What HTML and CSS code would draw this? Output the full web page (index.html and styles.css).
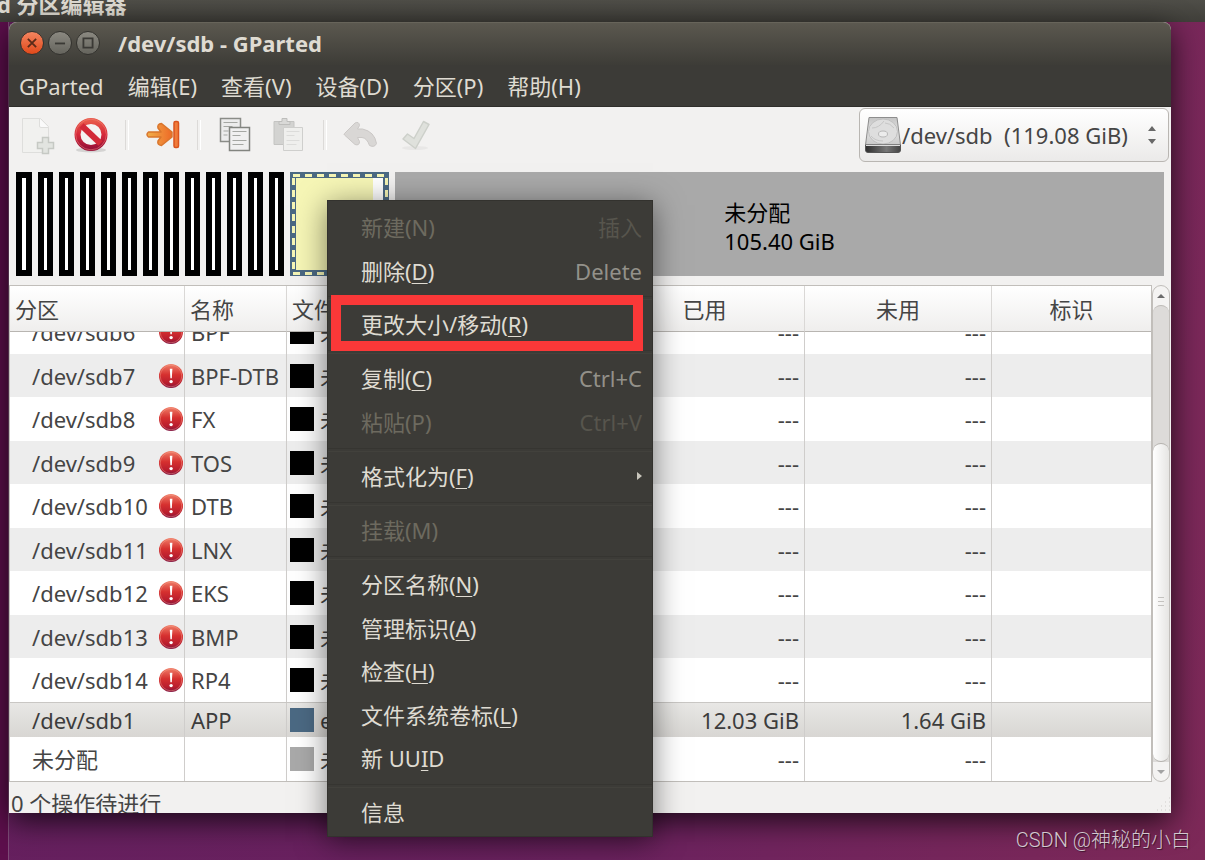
FILE: index.html
```html
<!DOCTYPE html>
<html lang="zh-CN">
<head>
<meta charset="utf-8">
<meta name="viewport" content="width=device-width, initial-scale=1">
<title>/dev/sdb - GParted</title>
<link rel="stylesheet" href="styles.css">
</head>
<body>
<svg class="defs" width="0" height="0" aria-hidden="true">
  <defs>
    <linearGradient id="red" x1="0" y1="0" x2="0" y2="1"><stop offset="0" stop-color="#f0806a"/><stop offset=".45" stop-color="#d6302f"/><stop offset=".8" stop-color="#b81d2e"/><stop offset="1" stop-color="#7d1340"/></linearGradient>
    <linearGradient id="stop" x1="0" y1="0" x2="0" y2="1"><stop offset="0" stop-color="#e8594a"/><stop offset=".5" stop-color="#d6293a"/><stop offset="1" stop-color="#9a1238"/></linearGradient>
    <linearGradient id="orange" x1="0" y1="0" x2="1" y2="0"><stop offset="0" stop-color="#f0b04c"/><stop offset="1" stop-color="#ee6a26"/></linearGradient>
    <linearGradient id="metal" x1="0" y1="0" x2="0" y2="1"><stop offset="0" stop-color="#c4c4c4"/><stop offset=".5" stop-color="#e2e2e2"/><stop offset="1" stop-color="#c9c9c9"/></linearGradient>
    <linearGradient id="base" x1="0" y1="0" x2="1" y2="0"><stop offset="0" stop-color="#2e2e2e"/><stop offset=".6" stop-color="#777"/><stop offset="1" stop-color="#444"/></linearGradient>
    <symbol id="error" viewBox="0 0 24 24">
      <circle cx="12" cy="12" r="12" fill="url(#red)"/>
      <circle cx="12" cy="12" r="10.8" fill="none" stroke="#f4a08c" stroke-opacity=".45"/>
      <path d="M10.8 4.8h2.6l-.6 9.4h-1.4z" fill="#fff"/><circle cx="12.1" cy="17.6" r="1.7" fill="#fff"/>
    </symbol>
  </defs>
</svg>

<header class="panel">d 分区编辑器</header>

<div class="desktop">
  <div class="launcher"></div>
  <main class="window">
    <div class="titlebar">
      <div class="controls">
        <button class="control close" aria-label="关闭"><svg viewBox="0 0 24 24"><path d="M7.500 7.500l9 9M16.500 7.500l-9 9"/></svg></button>
        <button class="control" aria-label="最小化"><svg viewBox="0 0 24 24"><path d="M6.500 12.500h11"/></svg></button>
        <button class="control" aria-label="最大化"><svg viewBox="0 0 24 24"><path d="M7 7h10v10h-10z"/></svg></button>
      </div>
      <h1 class="title">/dev/sdb - GParted</h1>
    </div>

    <nav class="menubar">
      <button>GParted</button><button>编辑(E)</button><button>查看(V)</button><button>设备(D)</button><button>分区(P)</button><button>帮助(H)</button>
    </nav>

    <div class="toolbar">
      <button class="tool" disabled aria-label="新建">
        <svg viewBox="0 0 36 36"><path d="M3.500 1.500h18l8 8v26h-26z" fill="#f1f1ef" stroke="#dededc"/><path d="M20.500 1.500v7.500q0 1.500 1.500 1.500h7.500" fill="#fafafa" stroke="#dededc"/><path d="M23.500 21.500h6v5h5v6h-5v5h-6v-5h-5v-6h5z" fill="#e2e4e0" stroke="#c6c9c4" stroke-width="1.500" transform="translate(0 -1)"/></svg>
      </button>
      <button class="tool" aria-label="删除">
        <svg viewBox="0 0 36 36"><ellipse cx="18" cy="33" rx="15" ry="2.500" fill="#000" opacity=".12"/><circle cx="18" cy="17.500" r="13.500" fill="#f4f3f2" stroke="url(#stop)" stroke-width="6"/><path d="M8.500 8.500l19 18" stroke="#d22a38" stroke-width="6"/><circle cx="18" cy="17.500" r="15.300" fill="none" stroke="#f08a80" stroke-opacity=".5"/></svg>
      </button>
      <span class="divider"></span>
      <button class="tool" aria-label="更改大小/移动">
        <svg viewBox="0 0 36 36"><path d="M3.500 15h12.500l-3-4q-1-4 3.500-4.500l10.500 8.500v5l-10.500 8.500q-4.500-.5-3.500-4.500l3-4h-12.500q-3-2.500 0-5z" fill="url(#orange)" stroke="#d9752c" stroke-width="1.500" stroke-linejoin="round"/><rect x="29" y="4.500" width="4.500" height="26" rx="1.500" fill="#f07b3a" stroke="#d9531e" stroke-width="1.500"/></svg>
      </button>
      <span class="divider"></span>
      <button class="tool" aria-label="复制">
        <svg viewBox="0 0 36 36"><path d="M3.500 1.500h20v23h-20z" fill="#ececec" stroke="#8a8c87" stroke-width="1.500"/><path d="M6.500 5.500h14M6.500 9.500h9M6.500 14h5M6.500 18h4" stroke="#a5a7a3"/><path d="M12.500 10.500h20v23h-20z" fill="#f0f0f0" stroke="#82847f" stroke-width="1.500"/><path d="M15.500 14.500h14M15.500 18.500h8M15.500 23.500h14M15.500 27.500h11" stroke="#a5a7a3"/></svg>
      </button>
      <button class="tool" disabled aria-label="粘贴">
        <svg viewBox="0 0 36 36"><path d="M3 4.500h20v23h-20z" fill="#d3d3d1" stroke="#c4c4c2"/><path d="M8 7.500v-3h3v-3h5v3h3v3z" fill="#d9d9d7" stroke="#bdbdbb"/><path d="M12.500 10.500h19v23h-19z" fill="#efefed" stroke="#cfcfcd"/><path d="M15.500 14.500h13M15.500 18.500h8M15.500 23.500h13M15.500 27.500h10" stroke="#dcdcda"/></svg>
      </button>
      <span class="divider"></span>
      <button class="tool" disabled aria-label="撤消">
        <svg viewBox="0 0 36 36"><path d="M1.500 16.500l10.500-10.500q4-2 4.500 2.500l-2 3.500h5q12 2.500 14 14.500q-2 4.500-7 2q-2.500-7.500-7.500-8h-4.500l2 4q0 4.500-4.500 3l-10.500-9.500q-1-1 0-1.500z" fill="#d9d7d5" stroke="#cbc8c6" stroke-linejoin="round"/></svg>
      </button>
      <button class="tool" disabled aria-label="应用">
        <svg viewBox="0 0 36 36"><ellipse cx="18" cy="31" rx="13" ry="2" fill="#000" opacity=".04"/><path d="M6 22l4.500-5 6.500 4.500 9.500-17 5.500 3-13.500 24z" fill="#dfe1dc" stroke="#cdd0ca" stroke-width="1.500" stroke-linejoin="round"/></svg>
      </button>

      <label class="device">
        <svg class="drive" viewBox="0 0 38 38"><path d="M5 1.500h28l3.500 27.500h-35z" fill="url(#metal)" stroke="#8d8d8d"/><ellipse cx="19" cy="15.500" rx="14.500" ry="12.500" fill="#dedede" stroke="#c0c0c0"/><ellipse cx="19" cy="18" rx="4.500" ry="3" fill="#ececec" stroke="#b8b8b8"/><path d="M8 12q7 0 12-7M30 12q-4-5-9-5M7 20q4 5 12 5" fill="none" stroke="#c6c6c6"/><path d="M1.500 29h35v5q0 2.500-2.500 2.500h-30q-2.500 0-2.500-2.500z" fill="url(#base)" stroke="#555"/><path d="M2 29.500h34" stroke="#ddd"/></svg>
        <select aria-label="设备"><option>/dev/sdb&nbsp;&nbsp;(119.08 GiB)</option></select>
        <svg class="spin" viewBox="0 0 10 20"><path d="M1 6l4-5 4 5zM1 14l4 5 4-5z" fill="#686868"/></svg>
      </label>
    </div>

    <div class="disk">
      <div class="slice first"></div><div class="slice"></div><div class="slice"></div><div class="slice"></div><div class="slice"></div><div class="slice"></div><div class="slice"></div><div class="slice"></div><div class="slice"></div><div class="slice"></div><div class="slice"></div><div class="slice"></div><div class="slice"></div>
      <div class="selected-part"><div class="usage"></div></div>
      <div class="free"><div>未分配<br>105.40 GiB</div></div>
    </div>

    <div class="list">
      <table class="parts">
        <thead>
          <tr><th>分区</th><th>名称</th><th>文件系统</th><th class="mid">已用</th><th class="mid">未用</th><th class="mid">标识</th></tr>
        </thead>
        <tbody>
          <tr><td><span>/dev/sdb6</span><svg class="err"><use href="#error"/></svg></td><td>BPF</td><td><i class="chip"></i>未知</td><td>---</td><td>---</td><td></td></tr>
          <tr><td><span>/dev/sdb7</span><svg class="err"><use href="#error"/></svg></td><td>BPF-DTB</td><td><i class="chip"></i>未知</td><td>---</td><td>---</td><td></td></tr>
          <tr><td><span>/dev/sdb8</span><svg class="err"><use href="#error"/></svg></td><td>FX</td><td><i class="chip"></i>未知</td><td>---</td><td>---</td><td></td></tr>
          <tr><td><span>/dev/sdb9</span><svg class="err"><use href="#error"/></svg></td><td>TOS</td><td><i class="chip"></i>未知</td><td>---</td><td>---</td><td></td></tr>
          <tr><td><span>/dev/sdb10</span><svg class="err"><use href="#error"/></svg></td><td>DTB</td><td><i class="chip"></i>未知</td><td>---</td><td>---</td><td></td></tr>
          <tr><td><span>/dev/sdb11</span><svg class="err"><use href="#error"/></svg></td><td>LNX</td><td><i class="chip"></i>未知</td><td>---</td><td>---</td><td></td></tr>
          <tr><td><span>/dev/sdb12</span><svg class="err"><use href="#error"/></svg></td><td>EKS</td><td><i class="chip"></i>未知</td><td>---</td><td>---</td><td></td></tr>
          <tr><td><span>/dev/sdb13</span><svg class="err"><use href="#error"/></svg></td><td>BMP</td><td><i class="chip"></i>未知</td><td>---</td><td>---</td><td></td></tr>
          <tr><td><span>/dev/sdb14</span><svg class="err"><use href="#error"/></svg></td><td>RP4</td><td><i class="chip"></i>未知</td><td>---</td><td>---</td><td></td></tr>
          <tr class="current"><td>/dev/sdb1</td><td>APP</td><td><i class="chip ext4"></i>ext4</td><td>12.03 GiB</td><td>1.64 GiB</td><td></td></tr>
          <tr><td>未分配</td><td></td><td><i class="chip none"></i>未分配</td><td>---</td><td>---</td><td></td></tr>
        </tbody>
      </table>
      <div class="scrollbar">
        <button class="step" aria-label="向上滚动"><svg viewBox="0 0 10 6"><path d="M1 5l4-4 4 4z" fill="#6b6b6b"/></svg></button>
        <div class="trough"><div class="thumb"><svg viewBox="0 0 6 10"><path d="M0 .5h6M0 4.500h6M0 8.500h6" stroke="#c4c2bf"/></svg></div></div>
        <button class="step" aria-label="向下滚动"><svg viewBox="0 0 10 6"><path d="M1 1l4 4 4-4z" fill="#a3a3a3"/></svg></button>
      </div>
    </div>

    <footer class="status"><span>0 个操作待进行</span>
      <svg class="grip" viewBox="0 0 16 16"><path d="M14 1h1M10 5h1M14 5h1M6 9h1M10 9h1M14 9h1M2 13h1M6 13h1M10 13h1M14 13h1" stroke="#cfcdca" stroke-width="1"/></svg>
    </footer>

    <ul class="menu" role="menu">
      <li><button role="menuitem" disabled>新建(N)<kbd>插入</kbd></button></li>
      <li><button role="menuitem"><span>删除(<u>D</u>)</span><kbd>Delete</kbd></button></li>
      <li class="rule" role="separator"></li>
      <li class="marked"><button role="menuitem"><span>更改大小/移动(<u>R</u>)</span></button></li>
      <li class="rule" role="separator"></li>
      <li><button role="menuitem"><span>复制(<u>C</u>)</span><kbd>Ctrl+C</kbd></button></li>
      <li><button role="menuitem" disabled>粘贴(P)<kbd>Ctrl+V</kbd></button></li>
      <li class="rule" role="separator"></li>
      <li><button role="menuitem"><span>格式化为(<u>F</u>)</span><svg class="sub" viewBox="0 0 6 10"><path d="M1 1l5 4-5 4z" fill="#c9c6bc"/></svg></button></li>
      <li class="rule" role="separator"></li>
      <li><button role="menuitem" disabled>挂载(M)</button></li>
      <li class="rule" role="separator"></li>
      <li><button role="menuitem"><span>分区名称(<u>N</u>)</span></button></li>
      <li><button role="menuitem"><span>管理标识(<u>A</u>)</span></button></li>
      <li><button role="menuitem"><span>检查(<u>H</u>)</span></button></li>
      <li><button role="menuitem"><span>文件系统卷标(<u>L</u>)</span></button></li>
      <li><button role="menuitem"><span>新 UU<u>I</u>D</span></button></li>
      <li class="rule" role="separator"></li>
      <li><button role="menuitem">信息</button></li>
    </ul>
  </main>
</div>
<div class="watermark">CSDN @神秘的小白</div>
</body>
</html>
```

FILE: styles.css
```css
* { box-sizing: border-box; }

body {
  margin: 0;
  min-height: 100vh;
  display: flex;
  flex-direction: column;
  overflow: hidden;
  position: relative;
  font: 22px/28px "Noto Sans", "Noto Sans CJK SC", sans-serif;
  color: #454545;
  background: #6b225e;
}

button, select {
  font: inherit;
  color: inherit;
  background: none;
  border: 0;
  padding: 0;
  margin: 0;
}

svg { display: block; flex: none; }
.defs { position: absolute; }

.panel {
  height: 22px;
  line-height: 8px;
  text-indent: -3px;
  font-weight: 700;
  white-space: nowrap;
  overflow: hidden;
  color: #dfdbd2;
  background: linear-gradient(#4f4e48, #403f3a);
}

.desktop {
  flex: 1;
  display: flex;
  padding: 0 34px 0 0;
  background: linear-gradient(100deg, #641f5e, #6b225f 55%, #7d2958);
}

.launcher {
  width: 9px;
  flex: none;
  background: #5d0f4c;
  border-right: 1px solid #7d4a76;
}

.window {
  flex: 1;
  min-width: 0;
  margin-bottom: 47px;
  display: flex;
  flex-direction: column;
  position: relative;
  border-radius: 8px 8px 0 0;
  background: #f2f1f0;
  box-shadow: 0 8px 30px rgba(0, 0, 0, .75);
}

.titlebar {
  height: 43px;
  display: flex;
  align-items: center;
  gap: 18px;
  padding: 0 0 2px 11px;
  border-radius: 8px 8px 0 0;
  border-top: 1px solid #67645a;
  background: linear-gradient(#5b584f, #3d3c37);
}

.controls { display: flex; gap: 4px; }

.control {
  width: 24px;
  height: 24px;
  border-radius: 50%;
  border: 1px solid #33322e;
  background: linear-gradient(#8b8981, #65645d);
}
.control svg { width: 22px; height: 22px; fill: none; stroke: #3a3935; stroke-width: 2; }
.control.close { background: linear-gradient(#f58560, #e0491a); }
.control.close svg { stroke: #5a2a18; }

.title { margin: 0; font-size: 22px; line-height: 28px; font-weight: 700; color: #dfdbd2; }

.menubar {
  height: 42px;
  display: flex;
  gap: 24px;
  padding-left: 10px;
  color: #dfdbd2;
  background: #3c3b37;
  border-bottom: 1px solid #2f2e2b;
}

.toolbar {
  height: 58px;
  display: flex;
  align-items: center;
  padding: 0 2px 2px 1px;
}
.tool { width: 54px; height: 54px; display: flex; align-items: center; justify-content: center; }
.tool svg { width: 36px; height: 36px; overflow: visible; }
.divider { width: 18px; height: 30px; display: flex; justify-content: center; }
.divider::before { content: ""; width: 2px; border-left: 1px solid #dcdad8; border-right: 1px solid #fff; }

.device {
  width: 310px;
  height: 54px;
  margin-left: auto;
  display: flex;
  align-items: center;
  padding: 0 11px 0 4px;
  border: 1px solid #b9b6b2;
  border-radius: 6px;
  background: linear-gradient(#fff, #ebeae9);
}
.drive { width: 38px; height: 38px; }
.device select { flex: 1; min-width: 0; height: 40px; appearance: none; }
.spin { width: 10px; height: 20px; }

.disk {
  height: 104px;
  display: flex;
  gap: 6px;
  margin: 7px 7px 9px;
}
.slice { width: 15px; border: 6px solid #000; background: #fff; }
.slice.first { width: 16px; }

.selected-part {
  width: 99px;
  padding: 6px;
  background:
    repeating-linear-gradient(90deg, #f5f5b5 0 7px, transparent 7px 12px) 3px 2px / 94px 3px no-repeat,
    repeating-linear-gradient(90deg, #f5f5b5 0 7px, transparent 7px 12px) 3px 100px / 94px 3px no-repeat,
    repeating-linear-gradient(#f5f5b5 0 7px, transparent 7px 12px) 2px 6px / 3px 94px no-repeat,
    repeating-linear-gradient(#f5f5b5 0 7px, transparent 7px 12px) 95px 6px / 3px 94px no-repeat,
    #4b6983;
}
.usage { height: 100%; background: linear-gradient(90deg, #f6f6b6 77px, #fff 77px); }

.free {
  flex: 1;
  display: flex;
  align-items: center;
  justify-content: center;
  padding-top: 5px;
  color: #000;
  line-height: 29px;
  background: #a9a9a9;
}

.list { flex: 1; min-height: 0; display: flex; }

.parts {
  flex: 1;
  min-width: 0;
  display: flex;
  flex-direction: column;
  border: 1px solid #c1beba;
  background: #fff;
}
.parts thead, .parts tr, .parts td, .parts th { display: block; }
.parts tr {
  display: grid;
  grid-template-columns: 175px 102px minmax(130px, 1fr) 200px 187px 159px;
}
.parts tbody {
  flex: 1 1 0;
  min-height: 0;
  display: flex;
  flex-direction: column;
  justify-content: flex-end;
  overflow: hidden;
}
.parts th {
  height: 46px;
  padding: 9px 5px 0;
  text-align: left;
  font-weight: 400;
  border-right: 1px solid #dad8d6;
  border-bottom: 1px solid #b8b5b1;
  background: linear-gradient(#fff, #efeeed);
}
.parts th.mid { text-align: center; }
.parts tbody tr { height: 44px; flex: none; }
.parts tbody tr:nth-child(even) { height: 43px; background: #ededed; }
.parts tbody tr.current {
  height: 35px;
  color: #3c3c3c;
  border-top: 1px solid #c9c7c4;
  background: linear-gradient(#e8e7e5, #d8d6d3);
}
.parts td {
  display: flex;
  align-items: center;
  min-width: 0;
  padding: 0 5px 0 6px;
  border-right: 1px solid #cfcdcb;
  white-space: nowrap;
}
.parts td:first-child { justify-content: space-between; padding: 0 1px 0 22px; }
.parts td:nth-child(3) { padding-left: 3px; gap: 6px; }
.parts td:nth-child(n+4) { justify-content: flex-end; }
.parts td:last-child, .parts th:last-child { border-right: 0; }
.err { width: 24px; height: 24px; }
.chip { width: 24px; height: 24px; background: #000; }
.chip.ext4 { background: #4b6983; }
.chip.none { background: #a9a9a9; }

.scrollbar {
  width: 18px;
  margin-right: 1px;
  display: flex;
  flex-direction: column;
  border: 1px solid #c1beba;
  border-radius: 9px;
  background: #f4f3f2;
}
.step { height: 19px; display: flex; align-items: center; justify-content: center; }
.step svg { width: 10px; height: 6px; }
.trough {
  flex: 1;
  display: flex;
  flex-direction: column;
  justify-content: flex-end;
  border-radius: 9px 9px 0 0;
  border-top: 1px solid #bdbab6;
  background: #dddbd9;
}
.thumb {
  height: 70%;
  display: flex;
  align-items: center;
  justify-content: center;
  border: 1px solid #b5b2ae;
  border-width: 1px 0;
  border-radius: 9px;
  background: linear-gradient(90deg, #fff, #e6e5e3);
}
.thumb svg { width: 6px; height: 10px; }

.status {
  height: 31px;
  padding: 7px 0 0 2px;
  display: flex;
  justify-content: space-between;
  overflow: hidden;
}
.grip { width: 16px; height: 16px; align-self: flex-end; }

.menu {
  position: absolute;
  left: 318px;
  top: 178px;
  width: 326px;
  margin: 0;
  padding: 4px 0 2px;
  list-style: none;
  color: #dfdbd2;
  background: #3c3b37;
  border: 1px solid #33322e;
  box-shadow: 0 5px 28px rgba(0, 0, 0, .5);
}
.menu li { height: 44px; }
.menu li:nth-child(12n+2), .menu li:nth-child(16) { height: 43px; }
.menu li.rule { height: 10px; padding-top: 4px; }
.rule::before {
  content: "";
  display: block;
  height: 2px;
  border-top: 1px solid #363531;
  border-bottom: 1px solid #42413c;
}
.menu button {
  width: 100%;
  height: 100%;
  padding: 0 10px 0 33px;
  display: flex;
  align-items: center;
  justify-content: space-between;
  white-space: nowrap;
}
.menu button:disabled { color: #6d6a5f; }
.menu kbd { font: inherit; color: #93918a; }
.menu button:disabled kbd { color: #57554d; }
.menu u { text-decoration-thickness: 1px; text-underline-offset: 3px; }
.sub { width: 6px; height: 10px; }

.marked { position: relative; }
.marked::after {
  content: "";
  position: absolute;
  inset: -7px 9px -5px 3px;
  border: 10px solid #fa3838;
  pointer-events: none;
}

.watermark {
  position: absolute;
  right: 14px;
  bottom: 6px;
  font: 300 20px/28px Roboto, "Noto Sans CJK SC", sans-serif;
  color: #d3c8d0;
  text-shadow: 1px 1px 1px rgba(0, 0, 0, .5);
}
```
